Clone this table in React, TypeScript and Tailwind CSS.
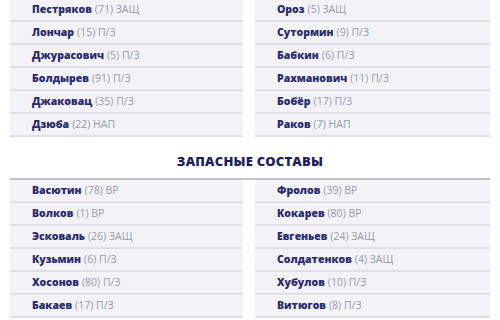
import React from "react";

type P = [string, string, string];

const startL: P[] = [
  ["Пестряков", "71", "ЗАЩ"],
  ["Лончар", "15", "П/З"],
  ["Джурасович", "5", "П/З"],
  ["Болдырев", "91", "П/З"],
  ["Джаковац", "35", "П/З"],
  ["Дзюба", "22", "НАП"],
];
const startR: P[] = [
  ["Ороз", "5", "ЗАЩ"],
  ["Сутормин", "9", "П/З"],
  ["Бабкин", "6", "П/З"],
  ["Рахманович", "11", "П/З"],
  ["Бобёр", "17", "П/З"],
  ["Раков", "7", "НАП"],
];
const subL: P[] = [
  ["Васютин", "78", "ВР"],
  ["Волков", "1", "ВР"],
  ["Эсковаль", "26", "ЗАЩ"],
  ["Кузьмин", "6", "П/З"],
  ["Хосонов", "80", "П/З"],
  ["Бакаев", "17", "П/З"],
];
const subR: P[] = [
  ["Фролов", "39", "ВР"],
  ["Кокарев", "80", "ВР"],
  ["Евгеньев", "24", "ЗАЩ"],
  ["Солдатенков", "4", "ЗАЩ"],
  ["Хубулов", "10", "П/З"],
  ["Витюгов", "8", "П/З"],
];

function Col({ items }: { items: P[] }) {
  return (
    <div className="flex flex-col">
      {items.map(([n, num, pos]) => (
        <div
          key={n}
          className="h-[23px] flex items-center pl-[22px] bg-[#f2f2f7] border-b-2 border-[#dedee4] text-[10.5px] leading-none"
        >
          <span className="font-extrabold text-[#2a2a6c]">{n}</span>
          <span className="ml-[3px] text-[#9a9aa8]">({num}) {pos}</span>
        </div>
      ))}
    </div>
  );
}

export default function App() {
  return (
    <div
      className="w-[500px] h-[320px] bg-white overflow-hidden"
      style={{ fontFamily: '"Open Sans", "Noto Sans", sans-serif' }}
    >
      <div className="grid grid-cols-[233px_235px] gap-x-[12px] pl-[10px] mt-[-1px]">
        <Col items={startL} />
        <Col items={startR} />
      </div>
      <div className="h-[41px] flex items-center justify-center pt-[9px] text-[13px] font-extrabold text-[#1f1f5e] tracking-[0.2px]">
        ЗАПАСНЫЕ СОСТАВЫ
      </div>
      <div className="ml-[10px] w-[480px] border-t-2 border-[#c4c4ca]">
        <div className="grid grid-cols-[233px_235px] gap-x-[12px]">
          <Col items={subL} />
          <Col items={subR} />
        </div>
      </div>
    </div>
  );
}
